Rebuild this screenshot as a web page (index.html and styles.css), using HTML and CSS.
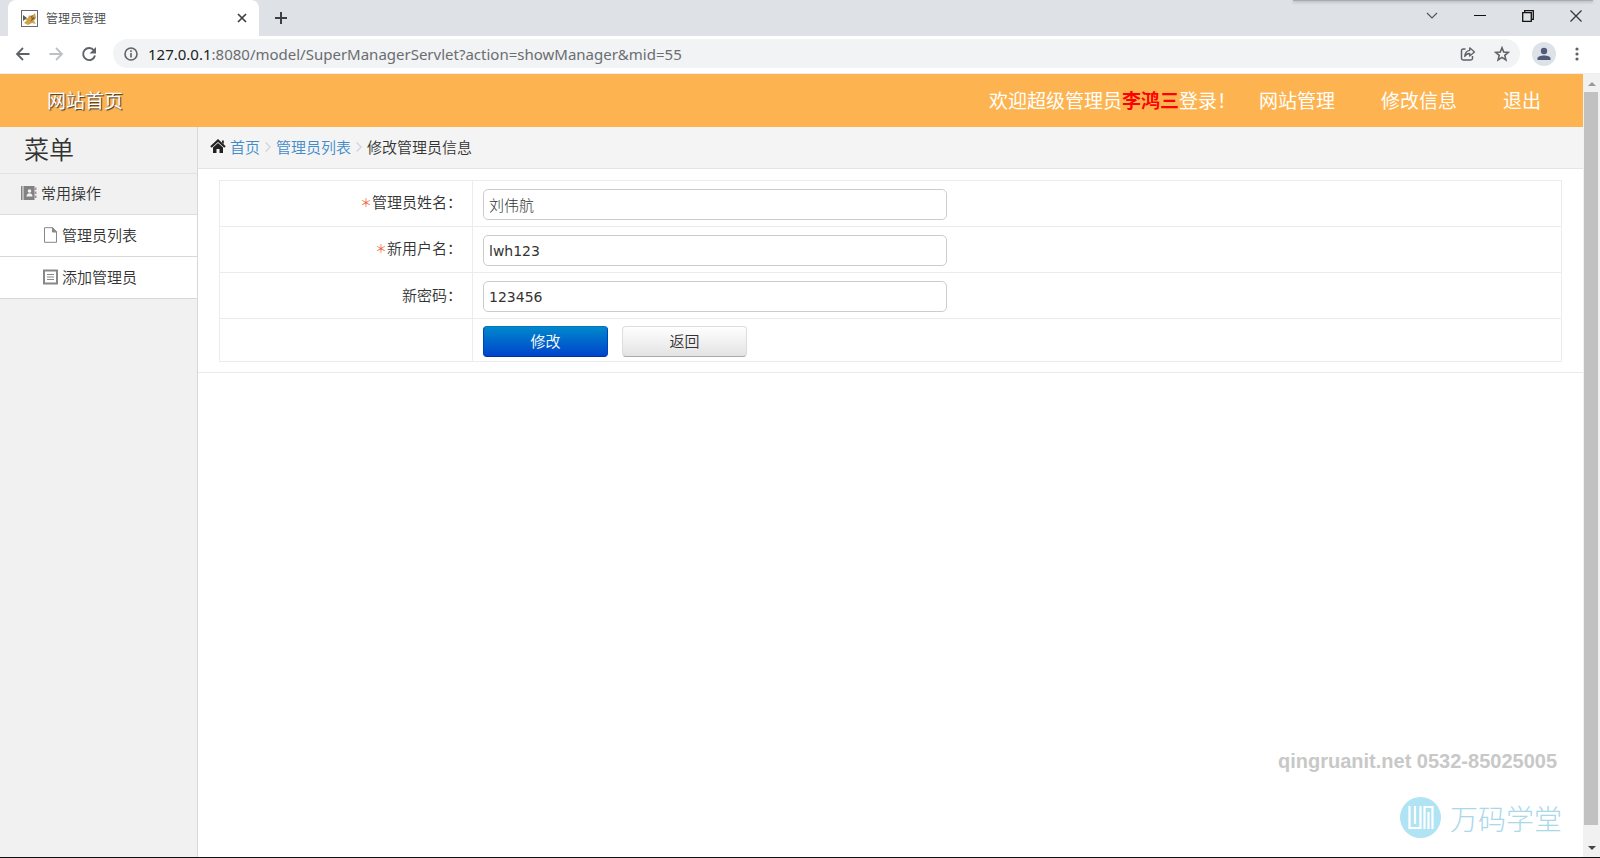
FILE: index.html
```html
<!DOCTYPE html>
<html lang="zh-CN">
<head>
<meta charset="utf-8">
<title>管理员管理</title>
<link rel="stylesheet" href="styles.css">
</head>
<body>
<div class="browser">
  <div class="tabstrip">
    <div class="tab">
      <svg class="favicon" viewBox="0 0 17 17" aria-hidden="true"><rect x=".5" y=".5" width="16" height="16" fill="#fff" stroke="#667"/><path d="M3 13l3-3-3-1 4-1 1-3 2 2 4-4 1 5-2 3 2 3-4-1-4 2z" fill="#d2a248"/><path d="M2 5l4 3-4 3zM9 12l3-5 2 1z" fill="#566058"/><path d="M9 6l3-1-1 4z" fill="#a8642c"/></svg>
      <span class="tab-title">管理员管理</span>
      <button class="tab-close" aria-label="关闭标签页"><svg width="10" height="10" viewBox="0 0 10 10"><path d="M1 1l8 8M9 1l-8 8" stroke="#3c4043" stroke-width="1.700"/></svg></button>
    </div>
    <button class="tab-new" aria-label="新标签页"><svg width="14" height="14" viewBox="0 0 14 14"><path d="M7 1v12M1 7h12" stroke="#3c4043" stroke-width="2"/></svg></button>
    <div class="window-shadow"></div>
    <div class="window-controls">
      <button aria-label="搜索标签页"><svg width="12" height="12" viewBox="0 0 12 12"><path d="M1 3l5 5 5-5" fill="none" stroke="#555" stroke-width="1.2"/></svg></button>
      <button aria-label="最小化"><svg width="12" height="12" viewBox="0 0 12 12"><path d="M0 5.500h12" stroke="#111"/></svg></button>
      <button aria-label="还原"><svg width="12" height="12" viewBox="0 0 12 12"><path d="M.7 2.700h8.600v8.600H.7zM2.700 2.500V.7h8.600v8.600H9.500" fill="none" stroke="#111" stroke-width="1.300"/></svg></button>
      <button aria-label="关闭"><svg width="12" height="12" viewBox="0 0 12 12"><path d="M.5.5l11 11M11.500.5l-11 11" stroke="#333" stroke-width="1.200"/></svg></button>
    </div>
  </div>
  <div class="toolbar">
    <button aria-label="后退"><svg width="16" height="16" viewBox="0 0 16 16"><path d="M14.500 8H2M8 2L2 8l6 6" fill="none" stroke="#5f6368" stroke-width="1.800"/></svg></button>
    <button aria-label="前进"><svg width="16" height="16" viewBox="0 0 16 16"><path d="M1.500 8H14M8 2l6 6-6 6" fill="none" stroke="#bdc1c6" stroke-width="1.800"/></svg></button>
    <button aria-label="重新加载"><svg width="16" height="16" viewBox="0 0 16 16"><path d="M13 4.500A6 6 0 1 0 14 9.500" fill="none" stroke="#5f6368" stroke-width="1.900"/><path d="M15 1v6.500H8.500z" fill="#5f6368"/></svg></button>
    <div class="address">
      <svg width="14" height="14" viewBox="0 0 14 14" aria-hidden="true"><circle cx="7" cy="7" r="6" fill="none" stroke="#5f6368" stroke-width="1.600"/><path d="M7 6v4.500M7 3.300v1.700" stroke="#5f6368" stroke-width="1.600"/></svg>
      <span class="url"><span class="url-host">127.0.0.1</span>:8080/model/SuperManagerServlet?action=showManager&amp;mid=55</span>
      <button aria-label="分享"><svg width="16" height="16" viewBox="0 0 16 16"><path d="M5.500 3H3.200C2 3 1.500 3.600 1.500 4.700v7.600c0 1.200.6 1.700 1.700 1.700h7.600c1.200 0 1.700-.6 1.700-1.700V10" fill="none" stroke="#5f6368" stroke-width="1.500"/><path d="M9.700 1.800L14.500 6 9.700 10V7.500C7.500 7.400 6 8.300 4.700 10.500 5 6.800 6.700 4.700 9.700 4.300z" fill="none" stroke="#5f6368" stroke-width="1.300" stroke-linejoin="round"/></svg></button>
      <button aria-label="收藏"><svg width="16" height="16" viewBox="0 0 16 16"><path d="M8 1.800l1.700 4.300 4.600.3-3.500 3 1.100 4.500L8 11.400l-3.900 2.500 1.100-4.500-3.500-3 4.600-.3z" fill="none" stroke="#5f6368" stroke-width="1.600"/></svg></button>
    </div>
    <button class="profile" aria-label="用户"><svg width="14" height="14" viewBox="0 0 14 14"><circle cx="7" cy="4" r="3.200" fill="#4f5b78"/><path d="M.5 13v-1.500C.5 9.500 3.500 8.500 7 8.500s6.500 1 6.500 3V13z" fill="#4f5b78"/></svg></button>
    <button aria-label="更多"><svg width="4" height="14" viewBox="0 0 4 14"><circle cx="2" cy="2" r="1.600" fill="#5f6368"/><circle cx="2" cy="7" r="1.600" fill="#5f6368"/><circle cx="2" cy="12" r="1.600" fill="#5f6368"/></svg></button>
  </div>

  <div class="viewport">
    <div class="page">
      <header class="site-header">
        <a class="brand" href="#">网站首页</a>
        <nav class="top-nav">
          <span class="welcome">欢迎超级管理员<strong>李鸿三</strong>登录！</span>
          <a href="#">网站管理</a>
          <a href="#">修改信息</a>
          <a href="#">退出</a>
        </nav>
      </header>
      <div class="columns">
        <aside class="sidebar">
          <h1>菜单</h1>
          <div class="menu-group">
            <svg width="16" height="16" viewBox="0 0 16 16" aria-hidden="true"><path d="M0 1h1.500v14H0zM2.500 1h11v14h-11z" fill="#828282"/><path d="M13.500 2.500h2V5h-2zM13.500 6.500h2V9h-2zM13.500 10.500h2V13h-2z" fill="#999"/><circle cx="8.500" cy="6" r="1.800" fill="#f1f1f1"/><path d="M5.500 11.500c0-2.500 1.500-3.300 3-3.300s3 .8 3 3.300z" fill="#f1f1f1"/></svg>
            <span>常用操作</span>
          </div>
          <ul class="menu">
            <li><a href="#"><svg width="15" height="16" viewBox="0 0 15 16"><path d="M1.500.7h8L13.500 5v10.300h-12z" fill="#fff" stroke="#888"/><path d="M9.500.7V5h4z" fill="#888" stroke="#888"/></svg>管理员列表</a></li>
            <li><a href="#"><svg width="15" height="16" viewBox="0 0 15 16"><path d="M1 1.500h13v13H1z" fill="#fff" stroke="#888" stroke-width="2"/><path d="M4 5.500h7M4 8h7M4 10.500h7" stroke="#888" stroke-width="1.200"/></svg>添加管理员</a></li>
          </ul>
        </aside>
        <main class="content">
          <nav class="breadcrumb">
            <svg class="home" width="16" height="15" viewBox="0 0 16 15" aria-hidden="true"><path d="M1 8l7-6.500L15 8" fill="none" stroke="#222" stroke-width="2.200"/><path d="M3 8.500L8 4l5 4.500V14H9.500v-4h-3v4H3zM12 1.500h1.800V5L12 3.500z" fill="#222"/></svg>
            <a href="#">首页</a>
            <svg class="sep" width="6" height="12" viewBox="0 0 6 12" aria-hidden="true"><path d="M.7 1.500L5 6 .7 10.500" fill="none" stroke="#d2d2e2" stroke-width="1.300"/></svg>
            <a href="#">管理员列表</a>
            <svg class="sep" width="6" height="12" viewBox="0 0 6 12" aria-hidden="true"><path d="M.7 1.500L5 6 .7 10.500" fill="none" stroke="#d2d2e2" stroke-width="1.300"/></svg>
            <span>修改管理员信息</span>
          </nav>
          <form class="form">
            <table>
              <tr><th><label for="name"><span class="required">＊</span>管理员姓名：</label></th><td><input id="name" type="text" class="cn" value="刘伟航"></td></tr>
              <tr><th><label for="user"><span class="required">＊</span>新用户名：</label></th><td><input id="user" type="text" value="lwh123"></td></tr>
              <tr><th><label for="pass">新密码：</label></th><td><input id="pass" type="text" value="123456"></td></tr>
              <tr class="action-row"><th></th><td><div class="actions"><button type="button" class="btn btn-primary">修改</button><button type="button" class="btn">返回</button></div></td></tr>
            </table>
          </form>
        </main>
      </div>
    </div>
    <div class="scrollbar">
      <svg width="17" height="18" viewBox="0 0 17 18"><path d="M5 12l4-4 4 4z" fill="#999"/></svg>
      <div class="thumb"></div>
      <svg width="17" height="18" viewBox="0 0 17 18"><path d="M5 7l4 4 4-4z" fill="#444"/></svg>
    </div>
    <div class="watermark">
      <div class="contact">qingruanit.net 0532-85025005</div>
      <div class="school">
        <svg width="41" height="41" viewBox="0 0 41 41" aria-hidden="true"><circle cx="20.500" cy="20.500" r="20.500" fill="#b0e3f3"/><path d="M9.500 9v22h11V9M15 9v18M24.500 32V10h8v22M28.500 15v17" fill="none" stroke="#fff" stroke-width="2.200"/></svg>
        <span>万码学堂</span>
      </div>
    </div>
  </div>
</div>
</body>
</html>
```
FILE: styles.css
```css
* { box-sizing: border-box; }
body {
  margin: 0;
  color: #333;
  font: 15px/20px "Noto Sans CJK SC", sans-serif;
  font-weight: 350;
}
svg { display: block; flex: none; }
a { color: inherit; text-decoration: none; }
button { padding: 0; border: 0; background: none; font: inherit; color: inherit; display: flex; align-items: center; justify-content: center; }

.browser { display: flex; flex-direction: column; min-height: 100vh; border-bottom: 1px solid #111; }

/* Tab strip */
.tabstrip { position: relative; display: flex; align-items: stretch; height: 36px; background: #dee1e6; padding-left: 8px; }
.tab { display: flex; align-items: center; width: 251px; padding: 0 12px 0 13px; background: #fff; border-radius: 8px 8px 0 0; }
.favicon { width: 17px; height: 17px; }
.tab-title { flex: 1; padding-left: 8px; font-size: 12px; color: #45484c; }
.tab-new { width: 44px; }
.window-controls { display: flex; margin-left: auto; height: 31px; }
.window-controls button { width: 48px; }
.window-shadow { position: absolute; top: 0; right: 7px; width: 300px; height: 1px; background: #a8abb0; box-shadow: 0 1px 3px #8b8e93; }

/* Toolbar */
.toolbar { display: flex; align-items: center; height: 38px; padding: 0 21px 2px 15px; background: #fff; border-bottom: 1px solid #eee; gap: 17px; }
.toolbar > button { flex: none; }
.address { flex: 1; display: flex; align-items: center; gap: 18px; height: 29px; padding: 0 10px 0 11px; margin-left: -1px; border-radius: 15px; background: #f1f3f4; }
.url { flex: 1; margin-left: -8px; font: 15px/20px "Noto Sans", sans-serif; color: #6a6d71; }
.url-host { color: #222; }
.profile { width: 24px; height: 24px; margin: 0 2px 0 -5px; border-radius: 50%; background: #dde1e8; }

/* Viewport */
.viewport { position: relative; flex: 1; display: flex; }
.page { flex: 1; display: flex; flex-direction: column; }
.site-header { display: flex; align-items: center; justify-content: space-between; height: 53px; padding: 0 19px 2px 47px; background: #fdb450; color: #fff; font-size: 19px; font-weight: 400; }
.brand { text-shadow: 1px 1px 1px #333; }
.top-nav { display: flex; }
.top-nav > * { padding: 0 23px; }
.top-nav .welcome { padding-right: 0; }
.top-nav strong { color: #f00; font-weight: 700; }
.columns { flex: 1; display: flex; }

.sidebar { width: 198px; flex: none; background: #f1f1f1; border-right: 1px solid #d8d8d8; }
.sidebar h1 { margin: 0; height: 47px; padding-left: 24px; font-size: 25px; line-height: 43px; font-weight: 350; border-bottom: 1px solid #e2e2e2; }
.menu-group { display: flex; align-items: center; gap: 4px; height: 41px; padding: 0 0 2px 21px; border-bottom: 1px solid #ddd; }
.menu { margin: 0; padding: 0; list-style: none; }
.menu a { display: flex; align-items: center; gap: 4px; height: 42px; padding: 0 0 2px 43px; background: #fff; border-bottom: 1px solid #d8d8d8; }

.content { flex: 1; }
.breadcrumb { display: flex; align-items: center; height: 42px; padding: 0 0 2px 12px; background: #f4f4f4; border-bottom: 1px solid #e5e5e5; }
.breadcrumb a { color: #428bca; }
.home { margin-right: 4px; }
.sep { margin: 0 5px; }

.form { padding: 11px 21px 10px; border-bottom: 1px solid #eaeaea; }
.form table { width: 100%; border-collapse: collapse; border: 1px solid #e5e5e5; }
.form th, .form td { height: 46px; padding: 0; border: 1px solid #ececec; }
.form .action-row > * { height: 43px; }
.form th { width: 253px; padding: 0 10px 2px 0; font-weight: 350; text-align: right; }
.form td { padding: 2px 0 0 10px; }
.required { color: #f06030; font-size: 12px; }
.form input { display: block; width: 464px; height: 31px; padding: 0 5px; border: 1px solid #ccc; border-radius: 5px; background: #fff; color: #333; font: 14px "DejaVu Sans", sans-serif; }
.form input.cn { font: 300 15px "Noto Sans CJK SC", sans-serif; }
.actions { display: flex; gap: 14px; }
.btn { width: 125px; height: 31px; border: 1px solid #ddd; border-bottom-color: #aaa; border-radius: 4px; background: linear-gradient(#fff, #e3e3e3); }
.btn-primary { color: #fff; border-color: #07b #04b #039; background: linear-gradient(#08c, #04c); }

/* Scrollbar */
.scrollbar { width: 17px; flex: none; display: flex; flex-direction: column; background: #f1f1f1; }
.thumb { flex: 1; margin: 0 2px 14px 1px; background: #c1c1c1; }

/* Watermark */
.watermark { position: absolute; right: 38px; bottom: 19px; display: flex; flex-direction: column; align-items: flex-end; gap: 24px; }
.contact { margin-right: 5px; color: #c8c8c8; font: bold 20px/24px "Liberation Sans", Arial, sans-serif; }
.school { display: flex; align-items: center; gap: 9px; color: #a9d8ea; font-size: 28px; line-height: 36px; font-weight: 300; }
```
